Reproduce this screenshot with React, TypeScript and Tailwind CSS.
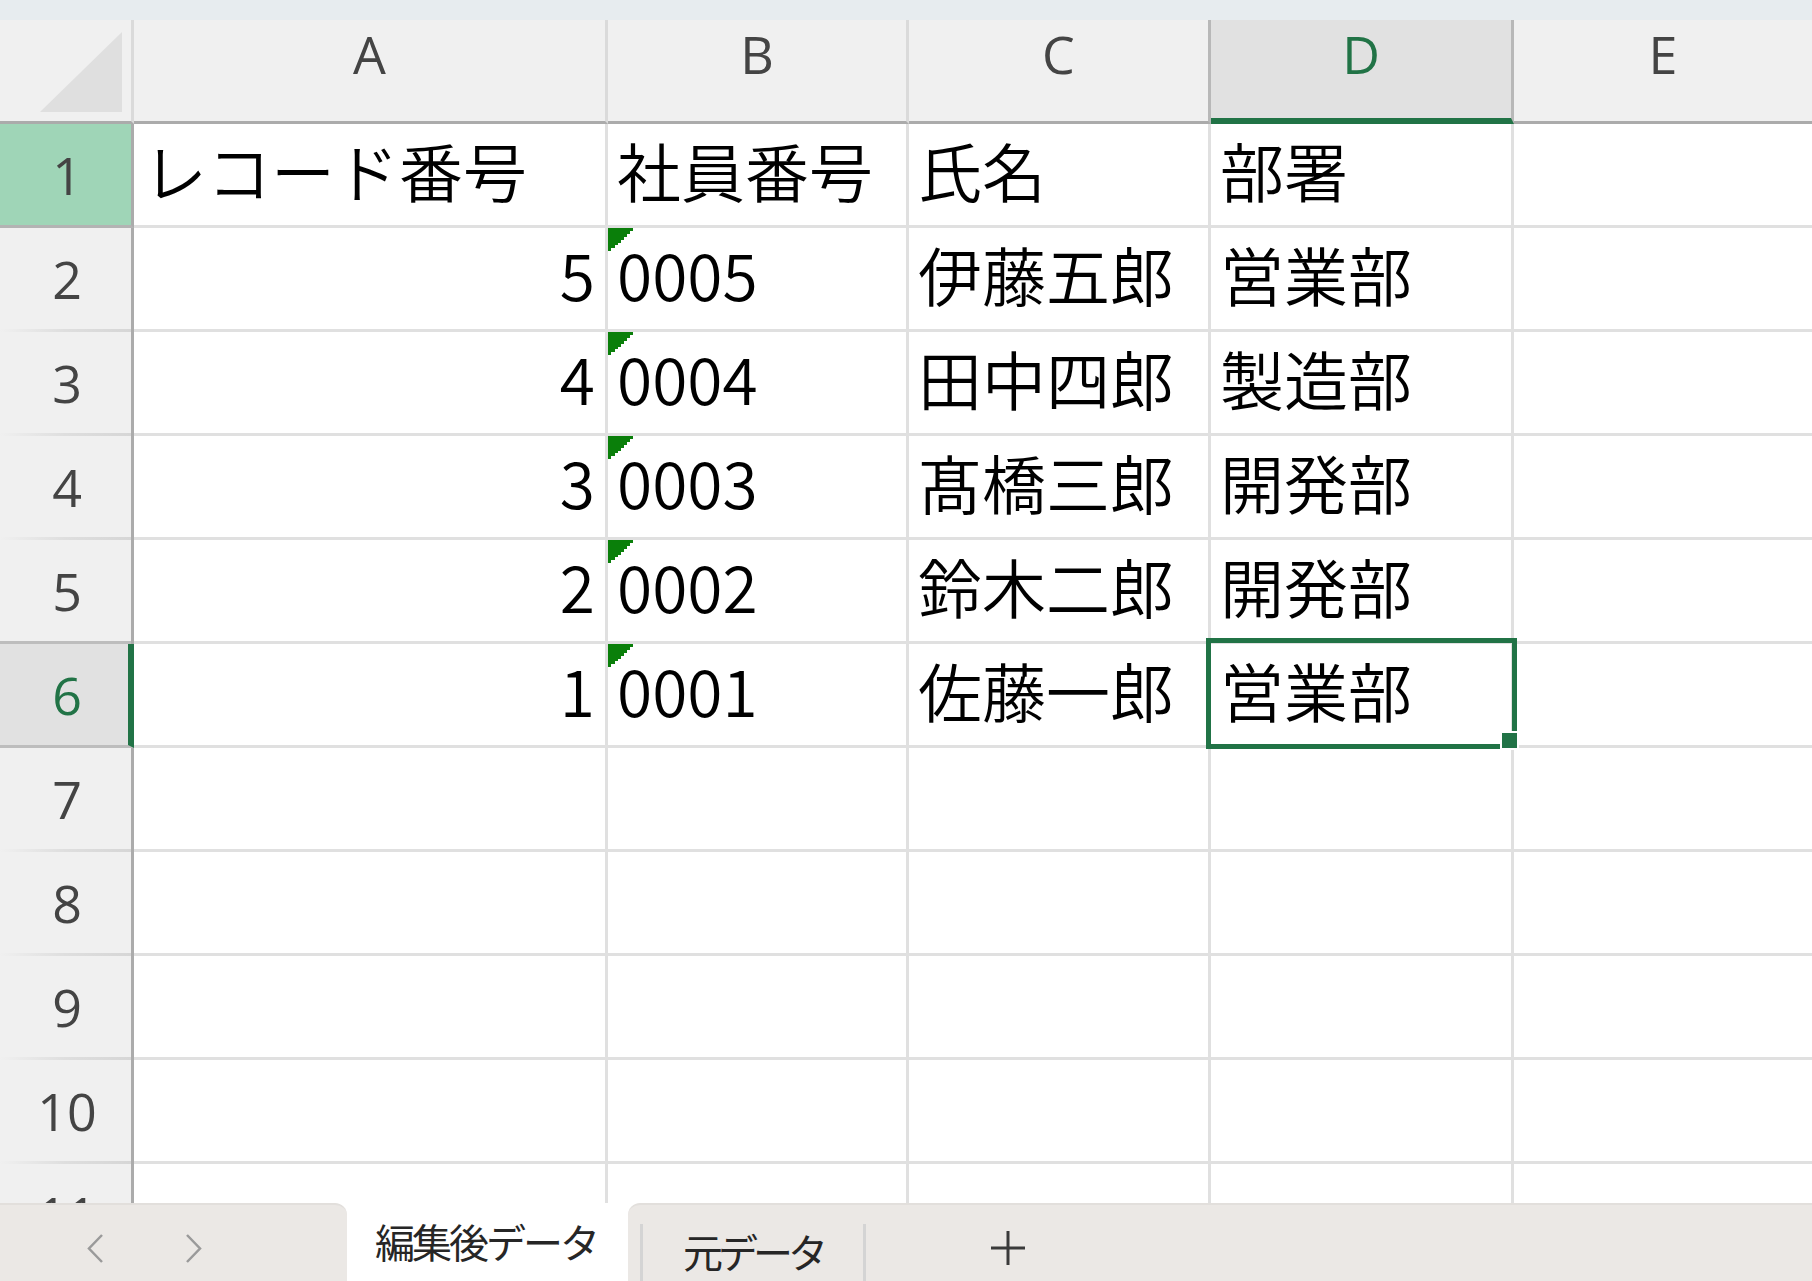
import React from "react";

type Row = { n: number; a?: string; b?: string; c?: string; d?: string };

const rows: Row[] = [
  { n: 1, a: "レコード番号", b: "社員番号", c: "氏名", d: "部署" },
  { n: 2, a: "5", b: "0005", c: "伊藤五郎", d: "営業部" },
  { n: 3, a: "4", b: "0004", c: "田中四郎", d: "製造部" },
  { n: 4, a: "3", b: "0003", c: "髙橋三郎", d: "開発部" },
  { n: 5, a: "2", b: "0002", c: "鈴木二郎", d: "開発部" },
  { n: 6, a: "1", b: "0001", c: "佐藤一郎", d: "営業部" },
  { n: 7 },
  { n: 8 },
  { n: 9 },
  { n: 10 },
  { n: 11 },
];

const cellBase =
  "border-r-[3px] border-b-[3px] border-[#e0e0e0] flex items-center px-[9px] pb-[12px] text-[64px] leading-[76px] font-[350] text-black whitespace-nowrap overflow-visible";

const numFont = "font-['Open_Sans',sans-serif] text-[52px] leading-[74px]";

function ErrorMark() {
  return (
    <svg
      className="absolute left-0 top-0"
      width="25"
      height="23"
      viewBox="0 0 25 23"
      shapeRendering="crispEdges"
    >
      <path
        d="M0 0H25V3H22V6H19V9H16V12H13V15H10V17H7V20H3V23H0Z"
        fill="#0a7f0a"
      />
    </svg>
  );
}

function RowHeader({ n }: { n: number }) {
  if (n === 1) {
    return (
      <div className="bg-[#9fd5b7] border-r-[3px] border-b-[3px] border-r-[#ababab] border-b-[#b3b3b3] flex items-center justify-center pl-[3px]">
        <span className={numFont + " text-[#444444]"}>{n}</span>
      </div>
    );
  }
  if (n === 6) {
    return (
      <div className="bg-[#e1e1e1] border-r-[6px] border-b-[3px] border-r-[#217346] border-b-[#bdbdbd] flex items-center justify-center pl-[6px]">
        <span className={numFont + " text-[#217346]"}>{n}</span>
      </div>
    );
  }
  return (
    <div className="bg-[#f0f0f0] border-r-[3px] border-[#ababab] flex flex-col">
      <div className="flex-1 flex items-center justify-center pl-[3px]">
        <span className={numFont + " text-[#444444]"}>{n}</span>
      </div>
      <div
        className={
          n === 5
            ? "h-[3px] bg-[#bdbdbd]"
            : "h-[3px] bg-gradient-to-r from-[#f0f0f0] via-[#dedede] to-[#d6d6d6]"
        }
      />
    </div>
  );
}

function ColHeader({ label, active, last, dark }: { label: string; active?: boolean; last?: boolean; dark?: boolean }) {
  return (
    <div
      className={
        (active
          ? "bg-[#e1e1e1] border-b-[6px] border-b-[#217346] text-[#217346] "
          : "bg-[#f0f0f0] border-b-[3px] border-b-[#ababab] text-[#444444] ") +
        (last ? "" : dark ? "border-r-[3px] border-r-[#b8b8b8] " : "border-r-[3px] border-r-[#dadada] ") +
        "flex justify-center items-start"
      }
    >
      <span className={numFont + " -mt-[3px]"}>{label}</span>
    </div>
  );
}

export default function App() {
  return (
    <div className="w-[1812px] h-[1281px] bg-white flex flex-col overflow-hidden font-['Noto_Sans_CJK_JP','Noto_Sans',sans-serif]">
      <div className="h-[1203px] shrink-0 overflow-hidden flex flex-col">
        <div className="h-[20px] shrink-0 bg-[#e7ecef]" />
        <div className="grid grid-cols-[134px_474px_301px_302px_303px_1fr] auto-rows-[104px]">
          {/* header row */}
          <div className="bg-[#f0f0f0] border-r-[3px] border-b-[3px] border-r-[#dadada] border-b-[#ababab] flex justify-end items-end pr-[9px] pb-[9px]">
            <svg width="82" height="80" viewBox="0 0 82 80">
              <polygon points="82,0 82,80 0,80" fill="#dfdfdf" />
            </svg>
          </div>
          <ColHeader label="A" />
          <ColHeader label="B" />
          <ColHeader label="C" dark />
          <ColHeader label="D" active dark />
          <ColHeader label="E" last />

          {rows.map((r) => (
            <React.Fragment key={r.n}>
              <RowHeader n={r.n} />
              <div className={cellBase + (r.n === 1 ? "" : " justify-end pr-[10px]")}>
                {r.a}
              </div>
              <div className={cellBase + " relative"}>
                {r.n >= 2 && r.n <= 6 && <ErrorMark />}
                {r.b}
              </div>
              <div className={cellBase}>{r.c}</div>
              <div className={cellBase + " relative"}>
                {r.d}
                {r.n === 6 && (
                  <div className="absolute -left-[5px] -top-[6px] -right-[6px] -bottom-[4px] border-[5px] border-[#217346] z-10">
                    <div className="absolute left-[289px] top-[88px] w-[19px] h-[19px] bg-[#217346] border-2 border-white" />
                  </div>
                )}
              </div>
              <div className="border-b-[3px] border-[#e0e0e0]" />
            </React.Fragment>
          ))}
        </div>
      </div>

      {/* sheet tab bar */}
      <div className="h-[78px] shrink-0 flex bg-white">
        <div className="w-[347px] bg-[#ebe8e5] rounded-tr-[12px] border-t-2 border-[#e2dfdc] flex items-start pt-[29px] pl-[87px] gap-[81px]">
          <svg width="17" height="29" viewBox="0 0 17 29">
            <polyline points="15,1 2,14.5 15,28" fill="none" stroke="#9a9a9a" strokeWidth="2.5" />
          </svg>
          <svg width="17" height="29" viewBox="0 0 17 29">
            <polyline points="2,1 15,14.5 2,28" fill="none" stroke="#9a9a9a" strokeWidth="2.5" />
          </svg>
        </div>
        <div className="w-[278px] bg-white flex flex-col pt-[18px]">
          <span className="pl-[28px] text-[40px] leading-none tracking-[-3px] text-[#262626]">編集後データ</span>
          <div className="ml-[25px] mt-[26px] w-[231px] h-[6px] bg-[#17804a]" />
        </div>
        <div className="w-[3px] bg-white" />
        <div className="flex-1 bg-[#ebe8e5] rounded-tl-[12px] border-t-2 border-[#e2dfdc] flex items-start">
          <div className="ml-[12px] mt-[19px] w-[3px] h-[57px] bg-[#d4d4d4]" />
          <span className="ml-[40px] mt-[26px] text-[40px] leading-none tracking-[-5px] text-[#262626]">元データ</span>
          <div className="ml-[40px] mt-[19px] w-[3px] h-[57px] bg-[#d4d4d4]" />
          <svg className="ml-[125px] mt-[26px]" width="34" height="34" viewBox="0 0 34 34">
            <line x1="17" y1="0" x2="17" y2="34" stroke="#3a3a3a" strokeWidth="3" />
            <line x1="0" y1="17" x2="34" y2="17" stroke="#3a3a3a" strokeWidth="3" />
          </svg>
        </div>
      </div>
    </div>
  );
}
